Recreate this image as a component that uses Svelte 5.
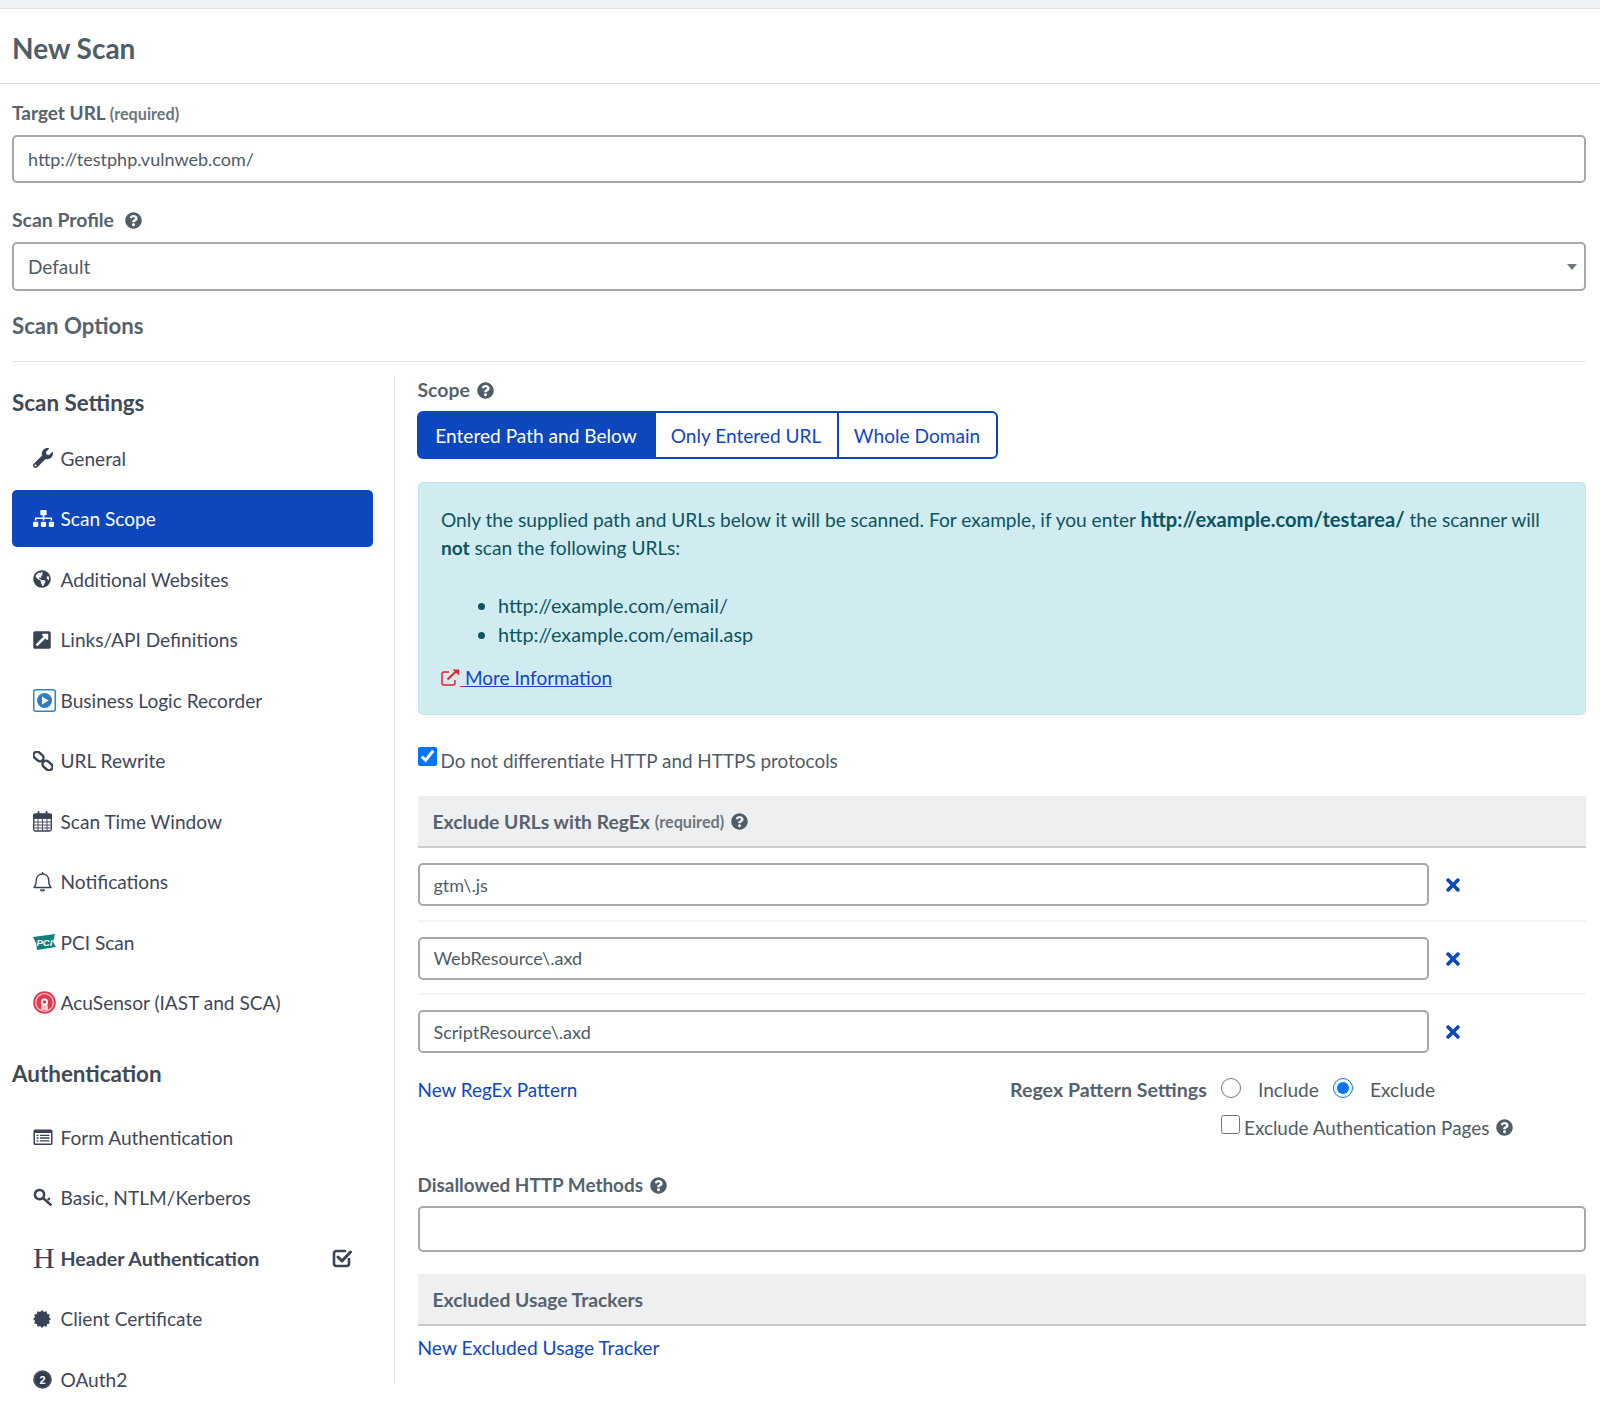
<script>
  const settings = [
    ['wrench', 'General'], ['sitemap', 'Scan Scope'], ['globe', 'Additional Websites'], ['ext', 'Links/API Definitions'],
    ['play', 'Business Logic Recorder'], ['link', 'URL Rewrite'], ['cal', 'Scan Time Window'], ['bell', 'Notifications'],
    ['pci', 'PCI Scan'], ['acu', 'AcuSensor (IAST and SCA)']
  ];
  const auth = [['form', 'Form Authentication'], ['key', 'Basic, NTLM/Kerberos'], ['h', 'Header Authentication'], ['cert', 'Client Certificate'], ['oauth', 'OAuth2']];
  const patterns = ['gtm\\.js', 'WebResource\\.axd', 'ScriptResource\\.axd'];
  const qPath = 'M504 256c0 136.997-111.043 248-248 248S8 392.997 8 256C8 119.083 119.043 8 256 8s248 111.083 248 248zM262.655 90c-54.497 0-89.255 22.957-116.549 63.758-3.536 5.286-2.353 12.415 2.715 16.258l34.699 26.31c5.205 3.947 12.621 3.008 16.665-2.122 17.864-22.658 30.113-35.797 57.303-35.797 20.429 0 45.698 13.148 45.698 32.958 0 14.976-12.363 22.667-32.534 33.976C247.128 238.528 216 254.941 216 296v4c0 6.627 5.373 12 12 12h56c6.627 0 12-5.373 12-12v-1.333c0-28.462 83.186-29.647 83.186-106.667 0-58.002-60.165-102-116.531-102zM256 338c-25.365 0-46 20.635-46 46 0 25.364 20.635 46 46 46s46-20.636 46-46c0-25.365-20.635-46-46-46z';
  let burst = '';
  for (let i = 0; i < 24; i++) {
    const r = i % 2 ? 8 : 10, a = (i * Math.PI) / 12;
    burst += (10 + r * Math.cos(a)).toFixed(2) + ',' + (10 + r * Math.sin(a)).toFixed(2) + ' ';
  }
</script>

{#snippet q(cls)}
  <svg class="q {cls}" viewBox="0 0 512 512" aria-hidden="true"><path d={qPath} /></svg>
{/snippet}

{#snippet times()}
  <svg class="times" viewBox="0 0 352 512" aria-hidden="true"><path d="M242.72 256l100.07-100.07c12.28-12.28 12.28-32.19 0-44.48l-22.24-22.24c-12.28-12.28-32.19-12.28-44.48 0L176 189.28 75.93 89.21c-12.28-12.28-32.19-12.28-44.48 0L9.21 111.45c-12.28 12.28-12.28 32.19 0 44.48L109.28 256 9.21 356.07c-12.28 12.28-12.28 32.19 0 44.48l22.24 22.24c12.28 12.28 32.2 12.28 44.48 0L176 322.72l100.07 100.07c12.28 12.28 32.2 12.28 44.48 0l22.24-22.24c12.28-12.28 12.28-32.19 0-44.48L242.72 256z" /></svg>
{/snippet}

{#snippet icon(k)}
  <span class="ic">
    {#if k === 'wrench'}
      <svg width="20" height="20" viewBox="0 0 512 512"><path d="M507.73 109.1c-2.24-9.03-13.54-12.09-20.12-5.51l-74.36 74.36-67.88-11.31-11.31-67.88 74.36-74.36c6.62-6.62 3.43-17.9-5.66-20.16-47.38-11.74-99.55.91-136.58 37.93-39.64 39.64-50.55 97.1-34.05 147.2L18.74 402.76c-24.99 24.99-24.99 65.51 0 90.5 24.99 24.99 65.51 24.99 90.5 0l213.21-213.21c50.12 16.71 107.47 5.68 147.37-34.22 37.07-37.07 49.7-89.32 37.91-136.73zM64 472c-13.25 0-24-10.75-24-24 0-13.26 10.75-24 24-24s24 10.74 24 24c0 13.25-10.75 24-24 24z" /></svg>
    {:else if k === 'sitemap'}
      <svg width="21" height="17" viewBox="0 0 640 512"><path d="M128 352H32c-17.67 0-32 14.33-32 32v96c0 17.67 14.33 32 32 32h96c17.67 0 32-14.33 32-32v-96c0-17.67-14.33-32-32-32zm-24-80h192v48h48v-48h192v48h48v-57.59c0-21.17-17.23-38.41-38.41-38.41H344v-64h40c17.67 0 32-14.33 32-32V32c0-17.67-14.33-32-32-32H256c-17.67 0-32 14.33-32 32v96c0 17.67 14.33 32 32 32h40v64H94.41C73.23 224 56 241.23 56 262.41V320h48v-48zm264 80h-96c-17.67 0-32 14.33-32 32v96c0 17.67 14.33 32 32 32h96c17.67 0 32-14.33 32-32v-96c0-17.67-14.33-32-32-32zm240 0h-96c-17.67 0-32 14.33-32 32v96c0 17.67 14.33 32 32 32h96c17.67 0 32-14.33 32-32v-96c0-17.67-14.33-32-32-32z" /></svg>
    {:else if k === 'globe'}
      <svg width="18" height="18" viewBox="0 0 496 512"><path d="M248 8C111.03 8 0 119.03 0 256s111.03 248 248 248 248-111.03 248-248S384.97 8 248 8zm82.29 357.6c-3.9 3.88-7.99 7.95-11.31 11.28-2.99 3-5.1 6.7-6.17 10.71-1.51 5.66-2.73 11.38-4.77 16.87l-17.39 46.85c-13.76 3-28 4.69-42.65 4.69v-27.38c1.69-12.62-7.64-36.26-22.63-51.25-6-6-9.37-14.14-9.37-22.63v-32.01c0-11.64-6.27-22.34-16.46-27.97-14.37-7.95-34.81-19.06-48.81-26.11-11.48-5.78-22.1-13.14-31.65-21.75l-.8-.72a114.792 114.792 0 0 1-18.06-20.74c-9.38-13.77-24.66-36.42-34.59-51.14 20.47-45.5 57.36-82.04 103.2-101.89l24.01 12.01C203.48 89.74 216 82.01 216 70.11v-11.3c7.99-1.29 16.12-2.11 24.39-2.42l28.3 28.3c6.25 6.25 6.25 16.38 0 22.63L264 112l-10.34 10.34c-3.12 3.12-3.12 8.19 0 11.31l4.69 4.69c3.12 3.12 3.12 8.19 0 11.31l-8 8a8.008 8.008 0 0 1-5.66 2.34h-8.99c-2.08 0-4.08.81-5.58 2.27l-9.92 9.65a8.008 8.008 0 0 0-1.58 9.31l15.59 31.19c2.66 5.32-1.21 11.58-7.15 11.58h-5.64c-1.93 0-3.79-.7-5.24-1.96l-9.28-8.06a16.017 16.017 0 0 0-15.55-3.1l-31.17 10.39a11.95 11.95 0 0 0-8.17 11.34c0 4.53 2.56 8.66 6.61 10.69l11.08 5.54c9.41 4.71 19.79 7.16 30.31 7.16s22.59 27.29 32 32h66.75c8.49 0 16.62 3.37 22.63 9.37l13.69 13.69a30.503 30.503 0 0 1 8.93 21.57 46.536 46.536 0 0 1-13.72 32.98zM417 274.25c-5.79-1.45-10.84-5-14.15-9.97l-17.98-26.97a23.97 23.97 0 0 1 0-26.62l19.59-29.38c2.32-3.47 5.5-6.29 9.24-8.15l12.98-6.49C440.2 193.59 448 223.87 448 256c0 8.67-.74 17.16-1.82 25.54L417 274.25z" /></svg>
    {:else if k === 'ext'}
      <svg width="18" height="20" viewBox="0 0 448 512"><path d="M448 80v352c0 26.51-21.49 48-48 48H48c-26.51 0-48-21.49-48-48V80c0-26.51 21.49-48 48-48h352c26.51 0 48 21.49 48 48zm-88 16H248.029c-21.313 0-32.08 25.861-16.971 40.971l31.984 31.987L67.515 364.485c-4.686 4.686-4.686 12.284 0 16.971l31.029 31.029c4.687 4.686 12.285 4.686 16.971 0l195.526-195.526 31.988 31.991C357.058 263.977 384 253.425 384 231.979V120c0-13.255-10.745-24-24-24z" /></svg>
    {:else if k === 'play'}
      <svg width="23" height="23" viewBox="0 0 23 23"><rect x=".75" y=".75" width="21.5" height="21.5" rx="2" fill="#fff" stroke="#2f86c6" stroke-width="1.5" /><circle cx="11.5" cy="11.5" r="7.5" fill="#2f7fbd" /><path d="M9 7.5l6.5 4-6.5 4z" fill="#fff" /></svg>
    {:else if k === 'link'}
      <svg width="20" height="20" viewBox="0 0 20 20" fill="none" stroke="#3a4256" stroke-width="2.400"><rect x="0" y="2" width="11" height="7" rx="3.500" transform="rotate(40 5.500 5.500)" /><rect x="9" y="11" width="11" height="7" rx="3.500" transform="rotate(40 14.500 14.500)" /></svg>
    {:else if k === 'cal'}
      <svg width="19" height="21" viewBox="0 0 19 21" fill="none" stroke="#3a4256"><rect x=".7" y="3" width="17.6" height="17" rx="1.5" stroke-width="1.3" /><path d="M.7 3.4h17.6v4H.7z" fill="#3a4256" /><path d="M1 11h17M1 14h17M1 17h17M5 8v12M9.500 8v12M14 8v12" stroke-width=".9" /><path d="M5.500 1v3.500M13.500 1v3.500" stroke-width="1.900" stroke-linecap="round" /></svg>
    {:else if k === 'bell'}
      <svg width="19" height="21" viewBox="0 0 19 21" fill="none" stroke="#3a4256" stroke-width="1.400"><path d="M1 16.500c2-2 2.300-3.500 2.300-7C3.300 5.500 6 3 9.500 3s6.200 2.500 6.200 6.500c0 3.500.3 5 2.300 7z" stroke-linejoin="round" /><path d="M9.500 1v2" /><path d="M7.500 18.500c.5 1.800 3.500 1.800 4 0" fill="#3a4256" /></svg>
    {:else if k === 'pci'}
      <svg width="23" height="16" viewBox="0 0 23 16"><path d="M0 3l22-3-2 8 3 5L4 16 3 9z" fill="#0f7f7f" /><text x="3.500" y="12" class="pci">PCI</text></svg>
    {:else if k === 'acu'}
      <svg width="23" height="23" viewBox="0 0 23 23"><circle cx="11.500" cy="11.500" r="11.300" fill="#e23a4e" /><circle cx="11.500" cy="11.500" r="8.800" fill="none" stroke="#f7c4ca" stroke-width="1.300" /><path d="M4.500 16a8 8 0 0 1 14 0z" fill="#e23a4e" /><circle cx="11.500" cy="11" r="3.600" fill="#fff" /><circle cx="11.500" cy="11" r="1.700" fill="#e23a4e" /><rect x="8" y="14" width="7" height="5" fill="#f7c4ca" /></svg>
    {:else if k === 'form'}
      <svg width="20" height="17" viewBox="0 0 20 17"><rect x=".5" y=".5" width="19" height="15.500" rx="1.500" fill="#3a4256" /><rect x="2" y="4" width="16" height="10.500" fill="#fff" /><path d="M3.500 6.300h2M7 6.300h9.500M3.500 9h2M7 9h9.500M3.500 11.800h2M7 11.800h9.500" stroke="#3a4256" stroke-width="1.300" /></svg>
    {:else if k === 'key'}
      <svg width="20" height="20" viewBox="0 0 19 19" fill="none" stroke="#3a4256"><circle cx="6.200" cy="6.200" r="4.400" stroke-width="2.400" /><path d="M9.500 9.500l8 7" stroke-width="2.400" /><path d="M14 11.500l2-2" stroke-width="2" /></svg>
    {:else if k === 'h'}
      <span class="hglyph">H</span>
    {:else if k === 'cert'}
      <svg width="18" height="18" viewBox="0 0 20 20"><polygon points={burst} fill="#3a4256" /></svg>
    {:else if k === 'oauth'}
      <svg width="19" height="19" viewBox="0 0 19 19"><circle cx="9.500" cy="9.500" r="9.300" fill="#4a5163" /><circle cx="9.500" cy="9.500" r="7.500" fill="#333b4d" /><text x="9.500" y="13.500" class="two">2</text></svg>
    {/if}
  </span>
{/snippet}

<div class="topbar"></div>
<header class="head"><h1>New Scan</h1></header>

<main class="page">
  <label class="lbl first" for="target">Target URL <small>(required)</small></label>
  <input id="target" class="ctl big" value="http://testphp.vulnweb.com/" />

  <label class="lbl second" for="profile">Scan Profile {@render q('gap')}</label>
  <div class="selwrap">
    <select id="profile" class="ctl sel"><option>Default</option></select>
    <span class="caret"></span>
  </div>

  <h2 class="opts">Scan Options</h2>

  <div class="cols">
    <aside class="side">
      <h3 class="sh">Scan Settings</h3>
      <nav class="nav">
        {#each settings as [k, t]}
          <div class="item" class:active={t === 'Scan Scope'}>{@render icon(k)}<span>{t}</span></div>
        {/each}
      </nav>
      <h3 class="sh auth">Authentication</h3>
      <nav class="nav">
        {#each auth as [k, t]}
          <div class="item" class:strong={k === 'h'}>
            {@render icon(k)}<span>{t}</span>
            {#if k === 'h'}
              <svg class="chk" width="20" height="20" viewBox="0 0 20 20" fill="none" stroke="#3a4256" stroke-width="2.600" stroke-linecap="round" stroke-linejoin="round"><path d="M17 11v4.500a2.500 2.500 0 0 1-2.500 2.500h-10A2.500 2.500 0 0 1 2 15.500v-10A2.500 2.500 0 0 1 4.500 3H13" /><path d="M6 9l4 4 8.500-9" stroke-width="3" /></svg>
            {/if}
          </div>
        {/each}
      </nav>
    </aside>

    <section class="main">
      <div class="lbl scope">Scope {@render q('')}</div>
      <div class="group">
        <span class="btn on">Entered Path and Below</span>
        <span class="btn mid">Only Entered URL</span>
        <span class="btn end">Whole Domain</span>
      </div>

      <div class="alert">
        <p>Only the supplied path and URLs below it will be scanned. For example, if you enter <b class="url">http://example.com/testarea/</b> the scanner will <b>not</b> scan the following URLs:</p>
        <ul>
          <li>http://example.com/email/</li>
          <li>http://example.com/email.asp</li>
        </ul>
        <div class="more">
          <a href="#more"><span class="ei"><svg width="19" height="19" viewBox="0 0 19 19" fill="none" stroke="#e8212f" stroke-width="1.500"><path d="M8 4H3a2 2 0 0 0-2 2v9a2 2 0 0 0 2 2h9a2 2 0 0 0 2-2v-3" /><path d="M6.500 11.500L16 2.500" stroke-width="2" /><path d="M11.500 1.500h6.500v6z" fill="#e8212f" stroke="none" /></svg>&nbsp;</span>More Information</a>
        </div>
      </div>

      <label class="check"><input type="checkbox" class="cb" checked /> <span>Do not differentiate HTTP and HTTPS protocols</span></label>

      <div class="sect">Exclude URLs with RegEx <small>(required)</small> {@render q('')}</div>
      {#each patterns as p, i}
        <div class="row" class:last={i === 2}>
          <input class="ctl pat" value={p} />
          {@render times()}
        </div>
      {/each}

      <div class="regex">
        <a href="#new">New RegEx Pattern</a>
        <b class="rlabel">Regex Pattern Settings</b>
        <div class="radios">
          <input type="radio" name="rx" class="rd" /><span class="rt">Include</span>
          <input type="radio" name="rx" class="rd" checked /><span class="rt">Exclude</span>
        </div>
        <label class="authx"><input type="checkbox" class="cb2" /><span>Exclude Authentication Pages</span>{@render q('small')}</label>
      </div>

      <label class="lbl dis" for="methods">Disallowed HTTP Methods {@render q('')}</label>
      <input id="methods" class="ctl meth" />

      <div class="sect trackers">Excluded Usage Trackers</div>
      <a class="newt" href="#tracker">New Excluded Usage Tracker</a>
    </section>
  </div>
</main>

<style>
  :global(body) { margin: 0; background: #fff; font-family: "Lato", "Liberation Sans", sans-serif; font-size: 19.100px; color: #4f5b66; }
  .topbar { height: 8px; background: #eef2f4; border-bottom: 1px solid #dfe3e6; }
  .head { height: 75px; box-sizing: border-box; border-bottom: 1px solid #dcdcdc; padding: 3px 0 0 12px; display: flex; align-items: center; }
  h1 { margin: 0; font-size: 28px; font-weight: 700; color: #4f5d67; }
  .page { padding: 0 14px 0 12px; height: 1342px; box-sizing: border-box; overflow: hidden; }
  .lbl { display: block; line-height: 24px; font-weight: 700; color: #56626c; font-size: 19.400px; }
  .lbl small, .sect small { font-size: 16.200px; font-weight: 700; color: #6c757d; }
  .first { padding-top: 17px; margin-bottom: 9px; font-size: 19px; }
  .second { margin-top: 25px; margin-bottom: 10px; }
  .ctl { display: block; width: 100%; box-sizing: border-box; border: 2px solid #a8a8a8; border-radius: 5px; font: inherit; font-size: 18px; color: #4f5b66; background: #fff; padding: 0 14px; outline: none; }
  .big { height: 48px; }
  .selwrap { position: relative; }
  .sel { height: 49px; appearance: none; font-size: 19px; }
  .caret { position: absolute; right: 9px; top: 22px; border: 5.500px solid transparent; border-top: 6px solid #6f7880; border-bottom: 0; }
  .opts { margin: 23px 0 0; padding-bottom: 23px; line-height: 24px; font-size: 22.200px; font-weight: 700; color: #56626c; border-bottom: 1px solid #e4e4e4; }
  .cols { display: flex; margin-top: 13px; }
  .side { width: 383px; height: 1009px; box-sizing: border-box; border-right: 1px solid #e4e4e4; flex: none; }
  .sh { margin: 16px 0 0; line-height: 24px; font-size: 22.400px; font-weight: 700; color: #3f4a56; }
  .sh.auth { margin-top: 31px; }
  .nav { display: flex; flex-direction: column; gap: 3.500px; margin-top: 14.500px; width: 361px; }
  .sh.auth + .nav { margin-top: 22.500px; }
  .item { height: 57px; flex: none; border-radius: 5px; display: flex; align-items: center; padding-left: 21px; color: #3f4759; position: relative; }
  .ic { width: 27.500px; flex: none; display: flex; align-items: center; fill: #3a4256; }
  .active { background: #0d47bd; color: #fff; }
  .active .ic { fill: #fff; }
  .strong { font-weight: 700; font-size: 19.600px; }
  .chk { position: absolute; right: 21px; top: 18px; }
  .hglyph { font-family: "Liberation Serif", serif; font-size: 30px; font-weight: 400; line-height: 1; color: #3a4256; }
  .pci { font: italic 800 9.500px "Liberation Sans", sans-serif; fill: #fff; }
  .two { font: 700 11px "Liberation Sans", sans-serif; fill: #fff; text-anchor: middle; }
  .main { flex: 1; min-width: 0; padding-left: 22.500px; }
  .q { width: 17px; height: 17px; fill: #4f5d67; vertical-align: -2px; margin-left: 2px; }
  .q.gap { margin-left: 6px; }
  .q.small { width: 17px; height: 17px; margin-left: 3px; }
  .scope { margin-top: 3px; }
  .group { display: flex; width: 581px; height: 48px; margin: 9px 0 0 -1px; }
  .btn { box-sizing: border-box; display: flex; align-items: center; justify-content: center; color: #1246c2; border: 2px solid #0d47bd; margin-left: -2px; }
  .on { width: 239px; margin-left: 0; background: #0d47bd; color: #fff; border-radius: 6px 0 0 6px; }
  .mid { width: 185px; }
  .end { width: 161px; border-radius: 0 6px 6px 0; }
  .alert { margin-top: 23px; height: 233px; box-sizing: border-box; background: #d1ecf1; border: 1px solid #bee5eb; border-radius: 5px; padding: 21.500px 24px 0 22.500px; color: #0c5460; line-height: 28.800px; }
  .alert p { margin: 0 0 28px; }
  .url { font-size: 20.100px; }
  .alert ul { margin: 0 0 14px; padding-left: 57px; font-size: 19.800px; }
  .more { line-height: 29px; font-size: 19px; }
  .ei { color: #e8212f; text-decoration: underline; }
  .ei svg { vertical-align: -2px; }
  .alert a, .regex a, .newt { color: #1246c2; text-decoration: none; }
  .regex a { font-size: 18.900px; }
  .newt { font-size: 19.200px; }
  .alert a { text-decoration: underline; }
  .check { display: flex; align-items: center; gap: 4px; margin-top: 33px; height: 24px; font-size: 18.900px; }
  .cb { width: 19px; height: 19px; margin: -7px 0 0; }
  .sect { margin-top: 24px; height: 52px; box-sizing: border-box; background: #eeeff1; border-bottom: 2px solid #cccccc; padding: 1px 0 0 15px; display: flex; align-items: center; gap: 5px; font-weight: 700; color: #56626c; font-size: 19.300px; }
  .row { height: 73.500px; box-sizing: border-box; padding-top: 15px; border-bottom: 2px solid #f3f4f5; display: flex; align-items: flex-start; }
  .row.last { border-bottom: 0; height: 58px; }
  .pat { width: 1011px; height: 43px; flex: none; }
  .times { width: 14px; height: 20px; fill: #0d47bd; margin: 12px 0 0 17px; }
  .regex { display: grid; grid-template-columns: 592.500px 211px auto; grid-auto-rows: 24px; row-gap: 14px; margin-top: 24px; align-items: center; }
  .rlabel { color: #56626c; font-size: 19.600px; }
  .radios { display: flex; align-items: center; }
  .rd { width: 20px; height: 20px; margin: -3px 0 0; }
  .rt { margin-left: 17px; margin-right: 12px; width: 63px; }
  .rt:last-child { margin-right: 0; }
  .authx { grid-column: 3; display: flex; align-items: center; gap: 4px; font-size: 18.900px; }
  .cb2 { width: 19px; height: 19px; margin: -5px 0 0; }
  .dis { margin-top: 34px; margin-bottom: 9px; font-size: 18.900px; }
  .meth { height: 46px; }
  .trackers { margin-top: 22px; }
  .newt { display: block; margin-top: 10px; line-height: 24px; }
</style>
